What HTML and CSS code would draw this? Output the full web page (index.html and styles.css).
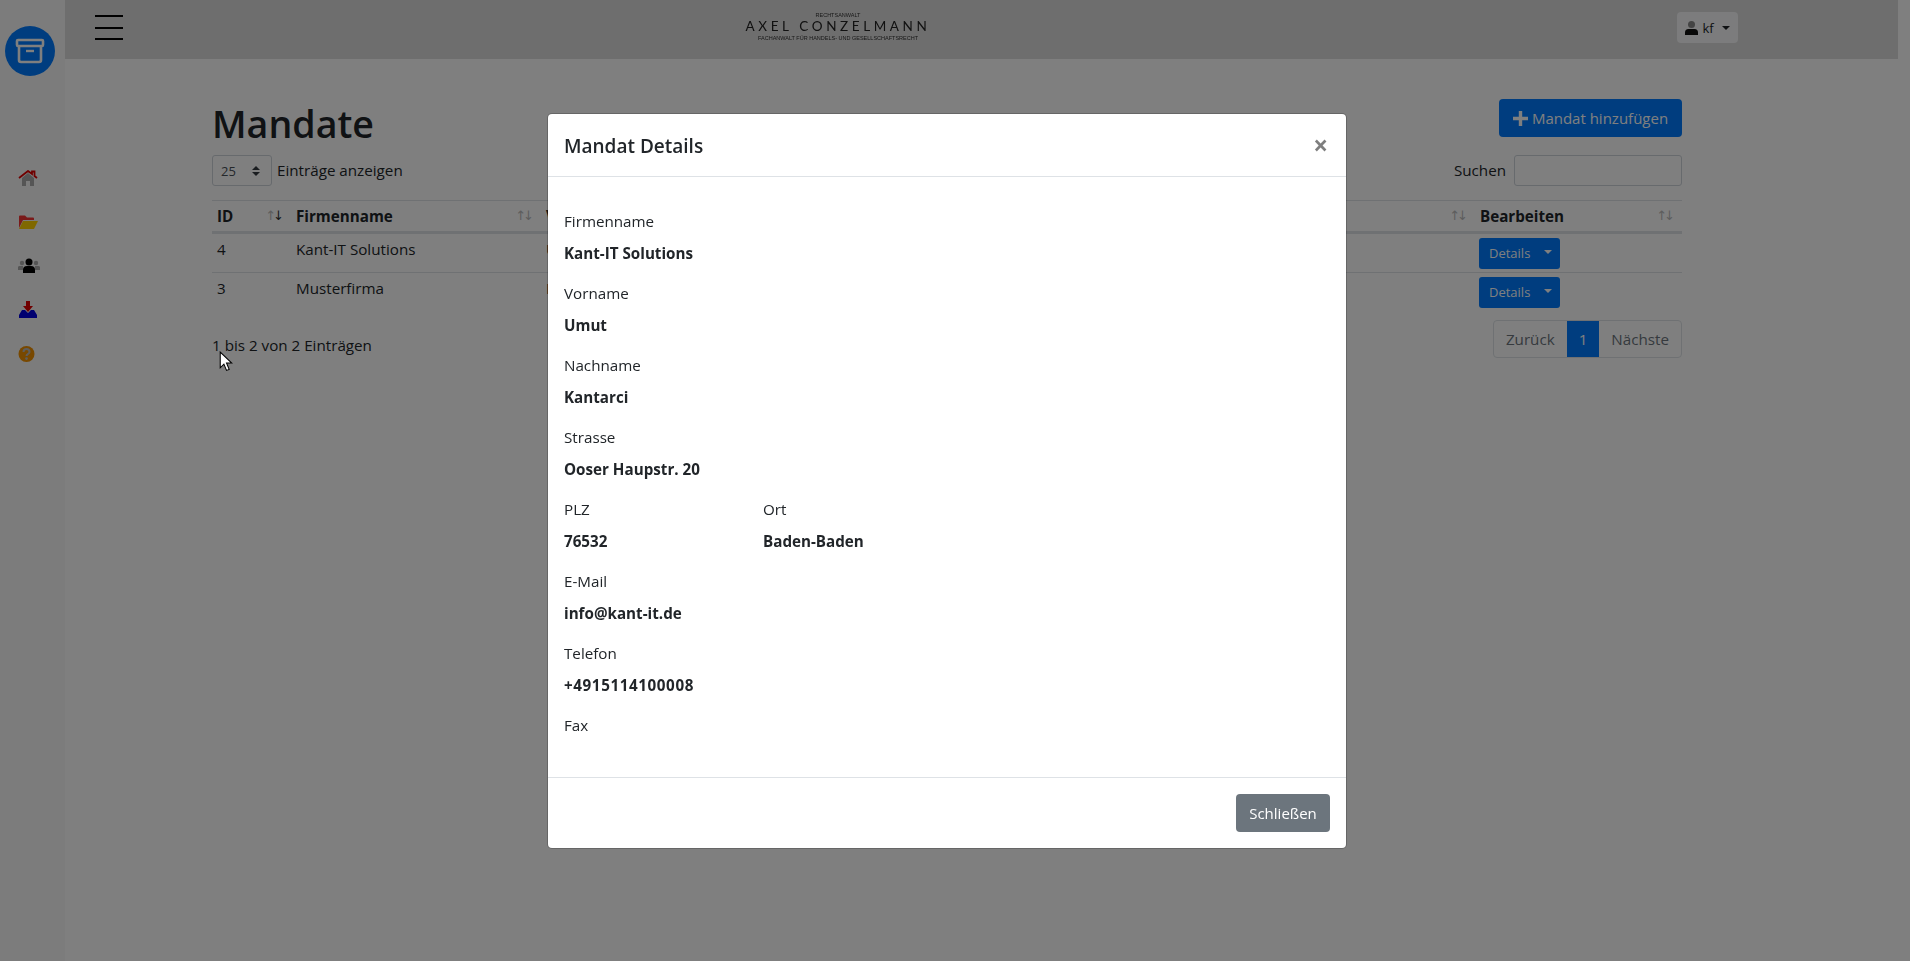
FILE: index.html
```html
<!DOCTYPE html>
<html lang="de">

<head>
    <meta charset="UTF-8">
    <meta name="viewport" content="width=device-width, initial-scale=1.0">
    <title>Mandate</title>
    <link rel="stylesheet" href="styles.css">
</head>

<body>
    <div class="layout">
        <div class="sidebar">
            <div class="brand">
                <svg width="30" height="26" viewBox="0 0 30 26" fill="none" stroke="#fff" stroke-width="2.6">
                    <rect x="2" y="2" width="26" height="6" rx="1"></rect>
                    <path d="M4 8v14a2 2 0 0 0 2 2h18a2 2 0 0 0 2-2V8"></path>
                    <path d="M11 13h8" stroke-width="2.4"></path>
                </svg>
            </div>
            <ul class="side-nav">
                <li>
                    <svg width="20" height="16" viewBox="0 0 20 16">
                        <path d="M4 8l6-5 6 5v8h-4v-5H8v5H4z" fill="#aaa"></path>
                        <path d="M1 8l9-7 4 3V1.500h2.500V6L19 8" fill="none" stroke="#e00000" stroke-width="1.800"></path>
                    </svg>
                </li>
                <li>
                    <svg width="20" height="16" viewBox="0 0 20 16">
                        <path d="M1 14V2.500a1 1 0 0 1 1-1h5l2 2h6a1 1 0 0 1 1 1V6H5z" fill="#f43434"></path>
                        <path d="M1 15l4-8h15l-4 8z" fill="#ffd000"></path>
                    </svg>
                </li>
                <li>
                    <svg width="22" height="16" viewBox="0 0 22 16">
                        <circle cx="4" cy="5" r="2.200" fill="#aaa"></circle>
                        <circle cx="18" cy="5" r="2.200" fill="#aaa"></circle>
                        <path d="M0 11a2 2 0 0 1 2-3h3v4H0zM22 11a2 2 0 0 0-2-3h-3v4h5z" fill="#aaa"></path>
                        <circle cx="11" cy="4" r="3.500" fill="#000"></circle>
                        <path d="M5 15v-3a4 4 0 0 1 4-4h4a4 4 0 0 1 4 4v3z" fill="#000"></path>
                    </svg>
                </li>
                <li>
                    <svg width="20" height="18" viewBox="0 0 20 18">
                        <path d="M1 17v-3l3-5h3l3 3 3-3h3l3 5v3z" fill="#0000e0"></path>
                        <path d="M8 0h4v5h3l-5 6-5-6h3z" fill="#e00000"></path>
                    </svg>
                </li>
                <li>
                    <svg width="18" height="18" viewBox="0 0 18 18">
                        <circle cx="8.500" cy="9" r="8" fill="#f09000"></circle>
                        <path d="M5.500 7a3 3 0 0 1 6 0c0 2-3 2-3 4" fill="none" stroke="#bbb" stroke-width="2"></path>
                        <circle cx="8.500" cy="13.600" r="1.300" fill="#bbb"></circle>
                    </svg>
                </li>
            </ul>
        </div>

        <div class="main">
            <div class="topbar">
                <div class="burger"><span></span><span></span><span></span></div>
                <div class="logo">
                    <div class="logo-small">RECHTSANWALT</div>
                    <div class="logo-name">AXEL CONZELMANN</div>
                    <div class="logo-small">FACHANWALT FÜR HANDELS- UND GESELLSCHAFTSRECHT</div>
                </div>
                <div class="user-button">
                    <svg width="13" height="14" viewBox="0 0 13 14">
                        <circle cx="6.500" cy="3.500" r="3.500" fill="#888"></circle>
                        <path d="M0 14v-2.500A3.500 3.500 0 0 1 3.500 8h6a3.500 3.500 0 0 1 3.500 3.500V14z" fill="#111"></path>
                    </svg>
                    <span>kf</span>
                    <span class="caret"></span>
                </div>
            </div>

            <div class="content">
                <div class="title-row">
                    <h1>Mandate</h1>
                    <a class="btn btn-primary btn-add">
                        <svg width="15" height="15" viewBox="0 0 15 15">
                            <path d="M5.800 0h3.400v5.800H15v3.400H9.200V15H5.800V9.200H0V5.800h5.800z" fill="#fff"></path>
                        </svg>
                        Mandat hinzufügen
                    </a>
                </div>
                <div class="controls">
                    <div class="length">
                        <select class="length-select">
                            <option>25</option>
                        </select>
                        <span class="control-label">Einträge anzeigen</span>
                    </div>
                    <div class="search">
                        <span class="control-label">Suchen</span>
                        <input type="text" class="search-input">
                    </div>
                </div>

                <table class="data-table">
                    <colgroup>
                        <col class="col-id">
                        <col class="col-firma">
                        <col>
                        <col class="col-edit">
                    </colgroup>
                    <thead>
                        <tr>
                            <th>ID<span class="sort sort-desc"><i>↑</i><i>↓</i></span></th>
                            <th>Firmenname<span class="sort"><i>↑</i><i>↓</i></span></th>
                            <th>Vorname<span class="sort"><i>↑</i><i>↓</i></span></th>
                            <th>Bearbeiten<span class="sort"><i>↑</i><i>↓</i></span></th>
                        </tr>
                    </thead>
                    <tbody>
                        <tr>
                            <td>4</td>
                            <td>Kant-IT Solutions</td>
                            <td>Umut</td>
                            <td>
                                <div class="split-btn"><span class="split-main">Details</span><span class="split-toggle"><span class="caret caret-white"></span></span></div>
                            </td>
                        </tr>
                        <tr>
                            <td>3</td>
                            <td>Musterfirma</td>
                            <td>Max</td>
                            <td>
                                <div class="split-btn"><span class="split-main">Details</span><span class="split-toggle"><span class="caret caret-white"></span></span></div>
                            </td>
                        </tr>
                    </tbody>
                </table>

                <div class="table-footer">
                    <div class="info">1 bis 2 von 2 Einträgen</div>
                    <div class="pagination">
                        <span class="page-item">Zurück</span>
                        <span class="page-item page-active">1</span>
                        <span class="page-item">Nächste</span>
                    </div>
                </div>
            </div>
        </div>
    </div>

    <div class="backdrop"></div>

    <div class="modal">
        <div class="modal-box">
            <div class="modal-header">
                <h5>Mandat Details</h5>
                <span class="modal-close">×</span>
            </div>
            <div class="modal-body">
                <div class="field"><label>Firmenname</label><p>Kant-IT Solutions</p></div>
                <div class="field"><label>Vorname</label><p>Umut</p></div>
                <div class="field"><label>Nachname</label><p>Kantarci</p></div>
                <div class="field"><label>Strasse</label><p>Ooser Haupstr. 20</p></div>
                <div class="field-row">
                    <div class="field"><label>PLZ</label><p>76532</p></div>
                    <div class="field"><label>Ort</label><p>Baden-Baden</p></div>
                </div>
                <div class="field"><label>E-Mail</label><p>info@kant-it.de</p></div>
                <div class="field"><label>Telefon</label><p class="wide-digits">+4915114100008</p></div>
                <div class="field"><label>Fax</label><p></p></div>
            </div>
            <div class="modal-footer">
                <a class="btn btn-secondary">Schließen</a>
            </div>
        </div>
    </div>

    <svg class="mouse-cursor" width="14" height="21" viewBox="0 0 13 20">
        <path d="M1 1v15l3.500-3.500 2.500 6 2.500-1-2.500-6H12z" fill="#fff" stroke="#000" stroke-width="1"></path>
    </svg>
</body>

</html>
```
FILE: styles.css
```css
* {
    box-sizing: border-box;
}

body {
    font-family: "Open Sans", sans-serif;
    font-size: 15.200px;
    line-height: 24px;
    margin: 0;
    padding: 0;
    background-color: #fff;
    color: #212529;
    overflow: hidden;
}

.layout {
    display: flex;
    height: 961px;
}

/* Sidebar */
.sidebar {
    width: 65px;
    background-color: #f8f8f8;
    padding-top: 26px;
    flex-shrink: 0;
}

.brand {
    width: 50px;
    height: 50px;
    margin-left: 5px;
    border-radius: 50%;
    background-color: #007bff;
    display: flex;
    align-items: center;
    justify-content: center;
}

.side-nav {
    list-style: none;
    margin: 94px 0 0;
    padding: 0 0 0 18px;
    display: flex;
    flex-direction: column;
    gap: 28px;
}

.side-nav li {
    height: 16px;
    display: flex;
    align-items: center;
}

.side-nav svg {
    display: block;
}

/* Top bar */
.main {
    flex: 1;
    margin-right: 12px;
    min-width: 0;
}

.topbar {
    height: 59px;
    background-color: #dcdcdc;
    display: flex;
    align-items: flex-start;
    padding: 12px 160px 0 30px;
}

.burger {
    width: 28px;
    padding-top: 3px;
    display: flex;
    flex-direction: column;
    gap: 9.500px;
}

.burger span {
    display: block;
    height: 2px;
    background-color: #000;
}

.logo {
    margin-left: 622px;
    width: 186px;
    text-align: center;
    color: #333;
    font-family: "Liberation Sans", sans-serif;
    filter: blur(0.4px);
}

.logo-small {
    font-size: 5.500px;
    line-height: 7px;
    white-space: nowrap;
}

.logo-name {
    font-family: "Lato", sans-serif;
    font-size: 13.500px;
    line-height: 14px;
    letter-spacing: 3.600px;
    color: #222;
    margin: 0 0 2px;
    white-space: nowrap;
}

.user-button {
    width: 61px;
    height: 31px;
    margin-left: auto;
    background-color: #f8f9fa;
    border-radius: 4px;
    display: flex;
    align-items: center;
    justify-content: center;
    gap: 4px;
    font-size: 13px;
}

.caret {
    display: inline-block;
    margin-left: 4px;
    border-top: 4px solid #212529;
    border-left: 4px solid transparent;
    border-right: 4px solid transparent;
}

.caret-white {
    margin: 0;
    border-top-color: #fff;
}

/* Content */
.content {
    padding: 40px 216px 0 147px;
}

.title-row {
    display: flex;
    justify-content: space-between;
    align-items: flex-start;
    height: 56px;
}

.title-row h1 {
    margin: 1px 0 0;
    font-size: 37.600px;
    line-height: 48px;
    font-weight: 600;
}

.btn {
    display: inline-flex;
    align-items: center;
    justify-content: center;
    height: 38px;
    border-radius: 4px;
    color: white;
    font-size: 15px;
}

.btn-primary {
    background-color: #007bff;
}

.btn-secondary {
    background-color: #6c757d;
    width: 94px;
}

.btn-add {
    width: 183px;
    gap: 4px;
}

.controls {
    display: flex;
    justify-content: space-between;
    align-items: center;
    height: 31px;
    margin-bottom: 14px;
}

.control-label {
    margin-top: -2px;
}

.length {
    display: flex;
    align-items: center;
    gap: 5px;
}

.length-select {
    appearance: none;
    width: 60px;
    height: 31px;
    padding: 0 8px;
    border: 1px solid #ced4da;
    border-radius: 3px;
    background: #fff url("data:image/svg+xml,%3Csvg xmlns='http://www.w3.org/2000/svg' width='8' height='10' viewBox='0 0 8 10'%3E%3Cpath d='M4 0L8 4H0zM4 10L0 6h8z' fill='%23343a40'/%3E%3C/svg%3E") no-repeat right 11px center;
    font-family: "Open Sans", sans-serif;
    font-size: 13px;
    color: #495057;
}

.search {
    display: flex;
    align-items: center;
    gap: 8px;
}

.search-input {
    width: 168px;
    height: 31px;
    border: 1px solid #ced4da;
    border-radius: 3px;
    background-color: #fff;
}

/* Tabelle */
.data-table {
    width: 100%;
    table-layout: fixed;
    border-collapse: collapse;
}

.col-id {
    width: 79px;
}

.col-firma {
    width: 250px;
}

.col-edit {
    width: 207px;
}

.data-table th {
    position: relative;
    text-align: left;
    padding: 3px 5px;
    height: 29px;
    font-weight: 700;
    border-top: 1px solid #dee2e6;
    border-bottom: 3px solid #dee2e6;
}

.data-table td {
    height: 40px;
    padding: 3px 5px;
    vertical-align: top;
    border-top: 1px solid #dee2e6;
}

.sort {
    position: absolute;
    right: 7px;
    top: 3px;
    display: flex;
    font-size: 13px;
    font-weight: 400;
    color: #bbb;
}

.sort i {
    font-style: normal;
    font-family: "DejaVu Sans", sans-serif;
    margin-left: -3px;
}

.sort-desc i:last-child {
    color: #333;
}

.split-btn {
    display: flex;
    width: 81px;
    height: 31px;
    margin: 1px 0 0 -1px;
    border-radius: 3px;
    background-color: #007bff;
    color: white;
    font-size: 13px;
}

.split-main {
    flex: 1;
    padding-left: 10px;
    line-height: 31px;
}

.split-toggle {
    width: 24px;
    display: flex;
    align-items: center;
    justify-content: center;
    padding-bottom: 3px;
}

.table-footer {
    display: flex;
    justify-content: space-between;
    align-items: flex-start;
    margin-top: 7px;
}

.info {
    margin-top: 13px;
}

.pagination {
    display: flex;
    height: 38px;
    border: 1px solid #dee2e6;
    border-radius: 4px;
    overflow: hidden;
    color: #6c757d;
}

.page-item {
    padding: 6px 12px;
}

.page-active {
    background-color: #007bff;
    color: white;
}

/* Modal */
.backdrop {
    position: fixed;
    inset: 0;
    background-color: rgba(0, 0, 0, 0.5);
}

.modal {
    position: fixed;
    inset: 0;
    display: flex;
    justify-content: center;
    align-items: flex-start;
    padding: 114px 16px 0 0;
}

.modal-box {
    width: 798px;
    background-color: white;
    border-radius: 4px;
    box-shadow: 0 0 0 1px rgba(0, 0, 0, 0.2);
}

.modal-header {
    height: 63px;
    padding: 2px 18px 0 16px;
    display: flex;
    align-items: center;
    justify-content: space-between;
    border-bottom: 1px solid #dee2e6;
}

.modal-header h5 {
    margin: 0;
    font-size: 19px;
    font-weight: 600;
}

.modal-close {
    font-size: 26px;
    font-weight: 700;
    color: #000;
    opacity: 0.5;
    margin-top: -3px;
}

.modal-body {
    padding: 32px 16px 16px;
}

.field {
    display: flex;
    flex-direction: column;
}

.field label {
    margin-bottom: 8px;
}

.field p {
    margin: 0 0 16px;
    font-weight: 700;
}

.wide-digits {
    letter-spacing: 0.600px;
}

.field-row {
    display: grid;
    grid-template-columns: 199px 199px;
}

.modal-footer {
    height: 71px;
    padding: 0 16px;
    display: flex;
    align-items: center;
    justify-content: flex-end;
    border-top: 1px solid #dee2e6;
}

.mouse-cursor {
    position: fixed;
    left: 219px;
    top: 351px;
}
```
